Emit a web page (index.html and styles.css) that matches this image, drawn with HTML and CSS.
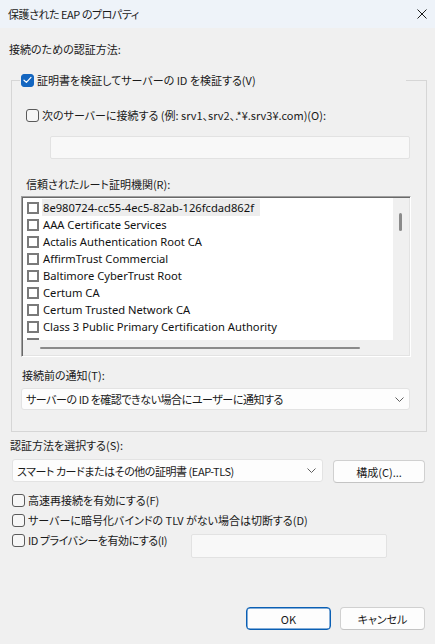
FILE: index.html
```html
<!DOCTYPE html>
<html lang="ja">
<head>
<meta charset="utf-8">
<title>保護された EAP のプロパティ</title>
<link rel="stylesheet" href="styles.css">
</head>
<body>
<div class="window">
  <div class="titlebar">
    <span class="title tight">保護された EAP のプロパティ</span>
    <svg class="close" width="10" height="10" viewBox="0 0 10 10"><path d="M0.5 0.5 L9.5 9.5 M9.5 0.5 L0.5 9.5" stroke="#1a1a1a" stroke-width="1" fill="none"/></svg>
  </div>
  <div class="content">
    <div class="label top-label">接続のための認証方法:</div>
    <fieldset class="group">
      <legend class="legend">
        <span class="legend-inner">
          <span class="cb checked"><svg width="9" height="8" viewBox="0 0 9 8"><path d="M1 4.2 L3.4 6.4 L8 1.4" stroke="#fff" stroke-width="1.2" fill="none" stroke-linecap="round" stroke-linejoin="round"/></svg></span>
          <span>証明書を検証してサーバーの ID を検証する(V)</span>
        </span>
      </legend>
      <div class="check-row server-row"><span class="cb"></span><span>次のサーバーに接続する (例: srv1、srv2、.*¥.srv3¥.com)(O):</span></div>
      <div class="textbox server-box"></div>
      <div class="label ca-label">信頼されたルート証明機関(R):</div>
      <div class="listbox">
        <div class="list-items">
          <div class="item"><span class="lcb"></span><span class="item-text focused">8e980724-cc55-4ec5-82ab-126fcdad862f</span></div>
          <div class="item"><span class="lcb"></span><span class="item-text">AAA Certificate Services</span></div>
          <div class="item"><span class="lcb"></span><span class="item-text">Actalis Authentication Root CA</span></div>
          <div class="item"><span class="lcb"></span><span class="item-text">AffirmTrust Commercial</span></div>
          <div class="item"><span class="lcb"></span><span class="item-text">Baltimore CyberTrust Root</span></div>
          <div class="item"><span class="lcb"></span><span class="item-text">Certum CA</span></div>
          <div class="item"><span class="lcb"></span><span class="item-text">Certum Trusted Network CA</span></div>
          <div class="item"><span class="lcb"></span><span class="item-text">Class 3 Public Primary Certification Authority</span></div>
          <div class="item"><span class="lcb"></span></div>
        </div>
        <div class="vscroll"><span class="vthumb"></span></div>
        <div class="hscroll"><span class="hthumb"></span></div>
        <div class="corner"></div>
      </div>
      <div class="label notify-label">接続前の通知(T):</div>
      <div class="combo notify-combo"><span class="tight">サーバーの ID を確認できない場合にユーザーに通知する</span><svg class="chev" width="9" height="5" viewBox="0 0 9 5"><path d="M0.5 0.5 L4.5 4.5 L8.5 0.5" stroke="#5f5f5f" stroke-width="1" fill="none"/></svg></div>
    </fieldset>
    <div class="label method-label">認証方法を選択する(S):</div>
    <div class="method-row">
      <div class="combo method-combo"><span class="tight">スマート カードまたはその他の証明書 (EAP-TLS)</span><svg class="chev" width="9" height="5" viewBox="0 0 9 5"><path d="M0.5 0.5 L4.5 4.5 L8.5 0.5" stroke="#5f5f5f" stroke-width="1" fill="none"/></svg></div>
      <button class="btn config">構成(C)...</button>
    </div>
    <div class="check-row opt first-opt"><span class="cb"></span><span>高速再接続を有効にする(F)</span></div>
    <div class="check-row opt"><span class="cb"></span><span>サーバーに暗号化バインドの TLV がない場合は切断する(D)</span></div>
    <div class="check-row opt privacy-row">
      <span class="privacy-label"><span class="cb"></span><span class="tight">ID プライバシーを有効にする(I)</span></span>
      <div class="textbox privacy-box"></div>
    </div>
    <div class="footer">
      <button class="btn primary">OK</button>
      <button class="btn">キャンセル</button>
    </div>
  </div>
</div>
</body>
</html>
```
FILE: styles.css
```css
* { box-sizing: border-box; }
html, body { margin: 0; padding: 0; }
body {
  width: 435px;
  height: 644px;
  overflow: hidden;
  background: #f0f0f0;
  color: #1a1a1a;
  font-family: "Noto Sans CJK JP", "Noto Sans", sans-serif;
  font-size: 11px;
  line-height: 16px;
  font-feature-settings: "palt";
}
.tight { letter-spacing: -0.45px; }
.window { display: flex; flex-direction: column; height: 644px; }
.titlebar {
  flex: none;
  height: 28px;
  background: #eef3f9;
  display: flex;
  align-items: center;
  justify-content: space-between;
  padding: 0 8px 0 8px;
}
.close { display: block; }
.content {
  flex: 1;
  display: flex;
  flex-direction: column;
  align-items: stretch;
  padding: 0 10px 14px 10px;
}
.label { white-space: nowrap; }
.top-label { margin: 13px 0 0 -1px; }
.group {
  margin: 15px -2px 0 1px;
  padding: 0 15px 21px 9px;
  border: 1px solid #d6d6d6;
  min-width: 0;
}
.legend {
  margin-left: -1px;
  padding: 0 0 0 1px;
  width: 386px;
  line-height: 16px;
}
.legend-inner { display: flex; align-items: center; gap: 3px; }
.check-row { display: flex; align-items: center; gap: 3px; white-space: nowrap; }
.cb {
  flex: none;
  width: 13px;
  height: 13px;
  border: 1px solid #5a5a5a;
  border-radius: 3px;
  background: #f6f6f6;
}
.cb.checked {
  background: #1466c0;
  border-color: #1466c0;
  display: flex;
  align-items: center;
  justify-content: center;
}
.cb.checked svg { display: block; }
.server-row { margin: 19px 0 0 5px; }
.textbox {
  background: #f8f8f8;
  border: 1px solid #e2e2e2;
  border-radius: 2px;
}
.server-box { margin: 13px 0 0 29px; width: 360px; height: 23px; }
.ca-label { margin: 17px 0 0 5px; }
.listbox {
  margin-top: 4px;
  width: 390px;
  height: 161px;
  border-style: solid;
  border-width: 1px;
  border-color: #a0a0a0 #ffffff #ffffff #a0a0a0;
  padding: 1px;
  box-shadow: inset 1px 1px 0 #696969, inset -1px -1px 0 #e3e3e3;
  display: grid;
  grid-template-columns: 370px 16px;
  grid-template-rows: 142px 15px;
}
.list-items {
  background: #ffffff;
  overflow: hidden;
  padding: 1px 0 0 4px;
  font-family: "Noto Sans", sans-serif;
  font-size: 11.2px;
  font-feature-settings: normal;
  color: #111;
}
.item { height: 17px; display: flex; align-items: center; white-space: nowrap; }
.lcb {
  flex: none;
  width: 12px;
  height: 12px;
  border: 2px solid #7a7a7a;
  background: #fff;
  margin-right: 3px;
}
.item-text { line-height: 17px; padding: 0 1px; }
.item-text.focused { background: #ededed; padding-right: 6px; }
.vscroll { background: #f0f0f0; padding: 15px 0 0 6px; }
.vthumb { display: block; width: 3px; height: 18px; border-radius: 2px; background: #8b8b8b; }
.hscroll { background: #f0f0f0; padding: 7px 0 0 17px; }
.hthumb { display: block; width: 320px; height: 2px; border-radius: 1px; background: #8b8b8b; }
.corner { background: #f0f0f0; }
.notify-label { margin: 10px 0 0 1px; }
.combo {
  height: 22px;
  background: #fdfdfd;
  border: 1px solid #e3e3e3;
  border-radius: 3px;
  display: flex;
  align-items: center;
  justify-content: space-between;
  white-space: nowrap;
}
.chev { display: block; flex: none; }
.notify-combo { margin-top: 5px; width: 389px; padding: 0 5px 0 4px; }
.method-label { margin: 5px 0 0 0; }
.method-row { margin: 6px 0 0 2px; display: flex; align-items: flex-start; gap: 10px; }
.method-combo { width: 311px; height: 23px; padding: 0 6px 0 4px; }
.btn {
  height: 23px;
  padding: 0;
  border: 1px solid #d0d0d0;
  border-bottom-color: #c4c4c4;
  border-radius: 4px;
  background: #fdfdfd;
  color: #1a1a1a;
  font: inherit;
  line-height: 16px;
}
.config { width: 92px; margin-top: 1px; }
.opt { margin-left: 2px; height: 20px; }
.first-opt { margin-top: 7px; }
.privacy-row { align-items: flex-start; }
.privacy-label { display: flex; align-items: center; gap: 3px; width: 176px; height: 20px; }
.privacy-box { width: 196px; height: 24px; margin-top: 4px; }
.footer { margin-top: auto; display: flex; justify-content: flex-end; gap: 9px; }
.footer .btn { width: 85px; }
.btn.primary { border-color: #0a5fb4; box-shadow: inset 0 0 0 0.5px #0a5fb4; }
```
